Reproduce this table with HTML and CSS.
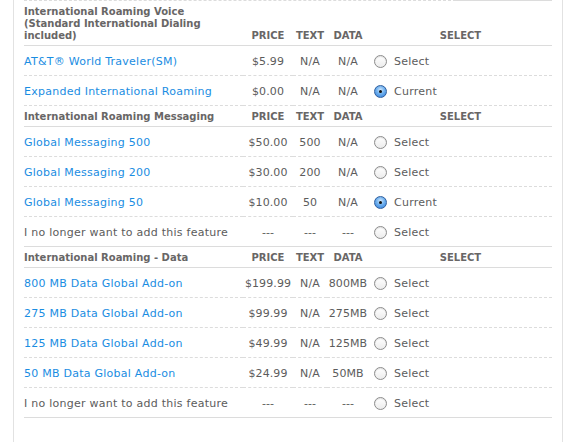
FILE: index.html
```html
<!DOCTYPE html>
<html>
<head>
<meta charset="utf-8">
<link rel="stylesheet" href="styles.css">
</head>
<body>
<div class="panel">
  <div class="topline"><span class="dash"></span><span class="solid"></span></div>
  <table class="plans">
    <colgroup>
      <col class="c-name"><col class="c-price"><col class="c-text"><col class="c-data"><col class="c-select">
    </colgroup>
    <tbody>
      <tr class="head">
        <td class="name">International Roaming Voice<br>(Standard International Dialing<br>included)</td>
        <td class="num">PRICE</td><td class="num">TEXT</td><td class="num">DATA</td><td class="num">SELECT</td>
      </tr>
      <tr class="row">
        <td class="name"><a>AT&amp;T® World Traveler(SM)</a></td>
        <td class="num">$5.99</td><td class="num">N/A</td><td class="num">N/A</td>
        <td class="sel"><span class="radio"></span>Select</td>
      </tr>
      <tr class="row">
        <td class="name"><a>Expanded International Roaming</a></td>
        <td class="num">$0.00</td><td class="num">N/A</td><td class="num">N/A</td>
        <td class="sel"><span class="radio on"></span>Current</td>
      </tr>
      <tr class="head">
        <td class="name">International Roaming Messaging</td>
        <td class="num">PRICE</td><td class="num">TEXT</td><td class="num">DATA</td><td class="num">SELECT</td>
      </tr>
      <tr class="row">
        <td class="name"><a>Global Messaging 500</a></td>
        <td class="num">$50.00</td><td class="num">500</td><td class="num">N/A</td>
        <td class="sel"><span class="radio"></span>Select</td>
      </tr>
      <tr class="row">
        <td class="name"><a>Global Messaging 200</a></td>
        <td class="num">$30.00</td><td class="num">200</td><td class="num">N/A</td>
        <td class="sel"><span class="radio"></span>Select</td>
      </tr>
      <tr class="row">
        <td class="name"><a>Global Messaging 50</a></td>
        <td class="num">$10.00</td><td class="num">50</td><td class="num">N/A</td>
        <td class="sel"><span class="radio on"></span>Current</td>
      </tr>
      <tr class="row last">
        <td class="name">I no longer want to add this feature</td>
        <td class="num">---</td><td class="num">---</td><td class="num">---</td>
        <td class="sel"><span class="radio"></span>Select</td>
      </tr>
      <tr class="head">
        <td class="name">International Roaming - Data</td>
        <td class="num">PRICE</td><td class="num">TEXT</td><td class="num">DATA</td><td class="num">SELECT</td>
      </tr>
      <tr class="row">
        <td class="name"><a>800 MB Data Global Add-on</a></td>
        <td class="num">$199.99</td><td class="num">N/A</td><td class="num">800MB</td>
        <td class="sel"><span class="radio"></span>Select</td>
      </tr>
      <tr class="row">
        <td class="name"><a>275 MB Data Global Add-on</a></td>
        <td class="num">$99.99</td><td class="num">N/A</td><td class="num">275MB</td>
        <td class="sel"><span class="radio"></span>Select</td>
      </tr>
      <tr class="row">
        <td class="name"><a>125 MB Data Global Add-on</a></td>
        <td class="num">$49.99</td><td class="num">N/A</td><td class="num">125MB</td>
        <td class="sel"><span class="radio"></span>Select</td>
      </tr>
      <tr class="row">
        <td class="name"><a>50 MB Data Global Add-on</a></td>
        <td class="num">$24.99</td><td class="num">N/A</td><td class="num">50MB</td>
        <td class="sel"><span class="radio"></span>Select</td>
      </tr>
      <tr class="row last">
        <td class="name">I no longer want to add this feature</td>
        <td class="num">---</td><td class="num">---</td><td class="num">---</td>
        <td class="sel"><span class="radio"></span>Select</td>
      </tr>
    </tbody>
  </table>
</div>
</body>
</html>
```
FILE: styles.css
```css
html, body {
  margin: 0;
  padding: 0;
  background: #fff;
}
body {
  font-family: "DejaVu Sans", Verdana, sans-serif;
  font-size: 11px;
  color: #5c5c5c;
}
.panel {
  margin-left: 13px;
  width: 528px;
  padding: 0 10px;
  min-height: 460px;
  border-left: 1px solid #e2e2e2;
  border-right: 1px solid #e2e2e2;
}
.topline {
  display: flex;
  height: 1px;
}
.topline .dash {
  width: 432px;
  border-top: 1px dashed #dcdcdc;
}
.topline .solid {
  flex: 1;
  border-top: 1px solid #dcdcdc;
}
.plans {
  width: 528px;
  table-layout: fixed;
  border-collapse: separate;
  border-spacing: 0;
}
.c-name { width: 219px; }
.c-price { width: 50px; }
.c-text { width: 34px; }
.c-data { width: 42px; }
.c-select { width: 183px; }
.plans td {
  padding: 0;
  white-space: nowrap;
}
.head td {
  font-size: 10px;
  font-weight: bold;
  color: #686666;
  line-height: 12px;
  height: 12px;
  padding: 5px 0 3px;
  vertical-align: bottom;
  border-bottom: 1px solid #dcdcdc;
}
.head td.name {
  white-space: normal;
}
.row td {
  line-height: 13px;
  height: 13px;
  padding: 9px 0 7px;
  vertical-align: middle;
  letter-spacing: 0.25px;
  border-bottom: 1px dashed #dcdcdc;
}
.row.last td {
  border-bottom: 1px solid #dcdcdc;
}
.num {
  text-align: center;
}
.row td.num {
  letter-spacing: 0.1px;
}
.row a {
  color: #1a8de2;
  text-decoration: none;
}
.row td.sel {
  padding-left: 5px;
}
.radio {
  display: inline-block;
  box-sizing: border-box;
  width: 13px;
  height: 13px;
  margin-right: 7px;
  vertical-align: top;
  border-radius: 50%;
  border: 1px solid #8c8c8c;
  background: linear-gradient(#ffffff, #ececec);
  box-shadow: inset 0 1px 1px rgba(0,0,0,0.12);
  position: relative;
}
.radio.on {
  border-color: #2f5f9e;
  background: radial-gradient(circle at 50% 35%, #cfe6fb 0%, #6fb0ee 45%, #2d7ad8 100%);
  box-shadow: none;
}
.radio.on::after {
  content: "";
  position: absolute;
  left: 4px;
  top: 4px;
  width: 3px;
  height: 3px;
  border-radius: 50%;
  background: #111;
}
```
